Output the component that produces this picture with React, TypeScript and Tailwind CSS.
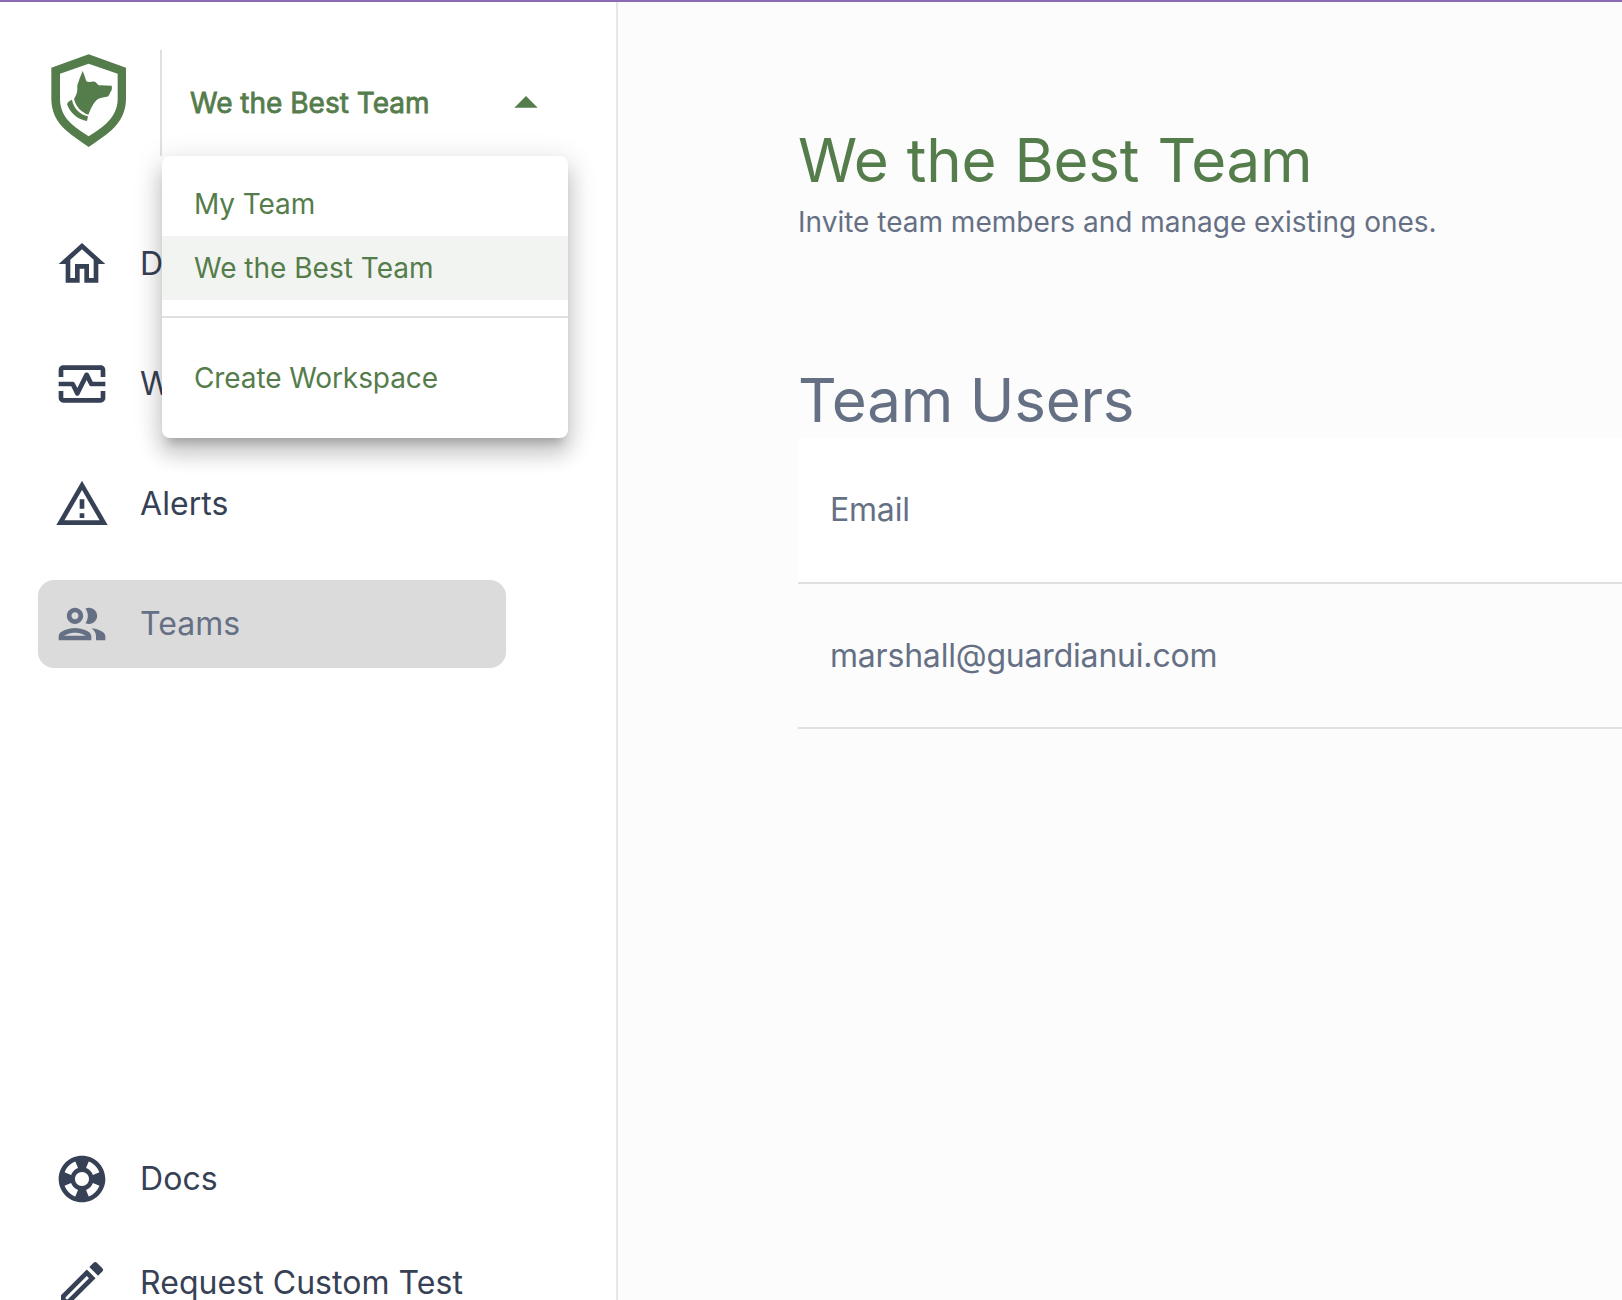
import type { ReactNode } from 'react'
import { MdArrowDropUp, MdOutlineEdit, MdOutlineHome, MdOutlineMonitorHeart } from 'react-icons/md'

function Logo() {
  return (
    <svg viewBox="60 69 231 285" className="ml-[50px] mt-[3px] h-[95px] w-[77px] shrink-0" fill="#557c4b">
      <path
        fillRule="evenodd"
        d="M176 73 L288 113 V206 C288 243 273 273 246 299 C224 319 199 334 176 351 C153 334 128 319 106 299 C78 273 64 243 64 206 V113 Z M176 101 L90 131 V206 C90 236 101 259 124 281 C140 296 159 307 176 319 C193 307 212 296 228 281 C251 259 263 236 263 206 V131 Z"
      />
      <path d="M158 123 C163 134 166 143 169 154 C178 158 186 154 194 155 C200 156 202 166 210 166 L245 167 C247 175 245 183 240 188 C238 196 235 200 226 201 C216 203 207 204 200 210 C189 221 181 238 175 254 C154 247 138 231 132 207 C137 198 142 190 142 178 C142 171 141 164 144 160 C146 156 147 151 149 145 C152 137 155 131 158 123 Z" />
      <path d="M126 209 C130 234 149 253 174 259 L171 273 C145 270 118 247 111 222 C114 215 120 211 126 209 Z" />
    </svg>
  )
}

function Glyph({ d }: { d: string }) {
  return (
    <svg viewBox="0 0 24 24" className="size-14" fill="currentColor" fillRule="evenodd">
      <path d={d} />
    </svg>
  )
}

const warning = 'M12 5.99 19.53 19H4.47L12 5.99M12 2 1 21h22L12 2zM13 16h-2v2h2v-2zM13 10h-2v4h2v-4z'

const people =
  'M9 13.75c-2.34 0-7 1.17-7 3.5V19h14v-1.75c0-2.33-4.66-3.5-7-3.5zM4.34 17c.84-.58 2.87-1.25 4.66-1.25s3.82.67 4.66 1.25H4.34zM9 12c1.93 0 3.5-1.57 3.5-3.5S10.93 5 9 5 5.5 6.57 5.5 8.5 7.07 12 9 12zm0-5c.83 0 1.5.67 1.5 1.5S9.83 10 9 10s-1.5-.67-1.5-1.5S8.17 7 9 7zm7.04 6.81c1.16.84 1.96 1.96 1.96 3.44V19h4v-1.75c0-2.02-3.5-3.17-5.96-3.44zM15 12c1.93 0 3.5-1.57 3.5-3.5S16.93 5 15 5c-.54 0-1.04.13-1.5.35.63.89 1 1.98 1 3.15s-.37 2.26-1 3.15c.46.22.96.35 1.5.35z'

const support =
  'M12 2C6.48 2 2 6.48 2 12s4.48 10 10 10 10-4.48 10-10S17.52 2 12 2zM19.46 9.12l-2.78 1.15c-.51-1.36-1.58-2.44-2.95-2.94l1.15-2.78C16.98 5.35 18.65 7.02 19.46 9.12zM12 15c-1.66 0-3-1.34-3-3s1.34-3 3-3 3 1.34 3 3S13.66 15 12 15zM9.13 4.54l1.17 2.78c-1.38.5-2.47 1.59-2.98 2.97L4.54 9.13C5.35 7.02 7.02 5.35 9.13 4.54zM4.54 14.87l2.78-1.15c.51 1.38 1.59 2.46 2.97 2.96l-1.17 2.78C7.02 18.65 5.35 16.98 4.54 14.87zM14.88 19.46l-1.15-2.78c1.37-.51 2.45-1.59 2.95-2.97l2.78 1.17C18.65 16.98 16.98 18.65 14.88 19.46z'

function NavItem({ icon, label, active }: { icon: ReactNode; label: string; active?: boolean }) {
  return (
    <a
      className={
        active
          ? 'flex h-[88px] w-[468px] items-center rounded-2xl bg-[#dbdbdb] pl-4 text-[#667085]'
          : 'flex h-[88px] w-[468px] items-center rounded-2xl pl-4 text-[#374155]'
      }
    >
      <span className="text-[56px]">{icon}</span>
      <span className="ml-[30px] whitespace-nowrap text-[32px] leading-[48px] tracking-[0.05px]">{label}</span>
    </a>
  )
}

function TeamMenu() {
  return (
    <div className="absolute left-[162px] top-[154px] z-10 h-[282px] w-[406px] rounded-lg bg-white pt-4 text-[28px] leading-[64px] text-[#557c4b] shadow-[0_10px_10px_-6px_rgba(0,0,0,0.2),0_16px_20px_2px_rgba(0,0,0,0.14),0_6px_28px_4px_rgba(0,0,0,0.12)]">
      <div className="h-16 px-8 tracking-[-0.1px]">My Team</div>
      <div className="h-16 bg-[#f2f4f1] px-8">We the Best Team</div>
      <div className="mt-4 border-t-2 border-[#e0e0e0] px-8 pt-[28px] tracking-[-0.1px]">Create Workspace</div>
    </div>
  )
}

function Sidebar() {
  return (
    <aside className="relative flex w-[618px] shrink-0 flex-col border-r-2 border-[#e6e6e6] bg-white">
      <div className="mt-12 flex h-[106px] shrink-0">
        <Logo />
        <button className="ml-[33px] flex w-[394px] items-center border-l-2 border-[#e0e0e0] pl-7 text-[#557c4b]">
          <span className="text-[28px] [-webkit-text-stroke:0.8px_#557c4b]">We the Best Team</span>
          <MdArrowDropUp className="ml-auto size-14" />
        </button>
      </div>
      <nav className="ml-[38px] mt-16 flex shrink-0 flex-col gap-8">
        <NavItem icon={<MdOutlineHome />} label="Dashboard" />
        <NavItem icon={<MdOutlineMonitorHeart />} label="Workflows" />
        <NavItem icon={<Glyph d={warning} />} label="Alerts" />
        <NavItem icon={<Glyph d={people} />} label="Teams" active />
      </nav>
      <nav className="ml-[38px] mt-[467px] flex shrink-0 flex-col gap-4">
        <NavItem icon={<Glyph d={support} />} label="Docs" />
        <NavItem icon={<MdOutlineEdit />} label="Request Custom Test" />
      </nav>
      <TeamMenu />
    </aside>
  )
}

export default function App() {
  return (
    <div className="flex h-[1300px] w-full flex-col overflow-hidden bg-white font-['Inter',sans-serif]">
      <div className="h-0.5 shrink-0 bg-[#8b6bb1]" />
      <div className="flex min-h-0 flex-1">
        <Sidebar />
        <main className="min-w-0 flex-1 bg-[#fcfcfc] pl-[180px] text-[#667085]">
          <h1 className="mt-[122px] text-[60px] leading-[72px] tracking-[-0.2px] text-[#557c4b] [word-spacing:1.5px]">
            We the Best Team
          </h1>
          <p className="mt-1.5 text-[28px] leading-10">Invite team members and manage existing ones.</p>
          <h2 className="mt-[122px] text-[60px] leading-[72px] tracking-[-0.2px]">Team Users</h2>
          <div className="mt-0.5 text-[32px]">
            <div className="flex h-[146px] items-center border-b-2 border-[#e0e0e0] bg-white pl-8 tracking-[-0.2px]">
              Email
            </div>
            <div className="flex h-[145px] items-center border-b-2 border-[#e0e0e0] pl-8 tracking-[-0.2px]">
              marshall@guardianui.com
            </div>
          </div>
        </main>
      </div>
    </div>
  )
}
